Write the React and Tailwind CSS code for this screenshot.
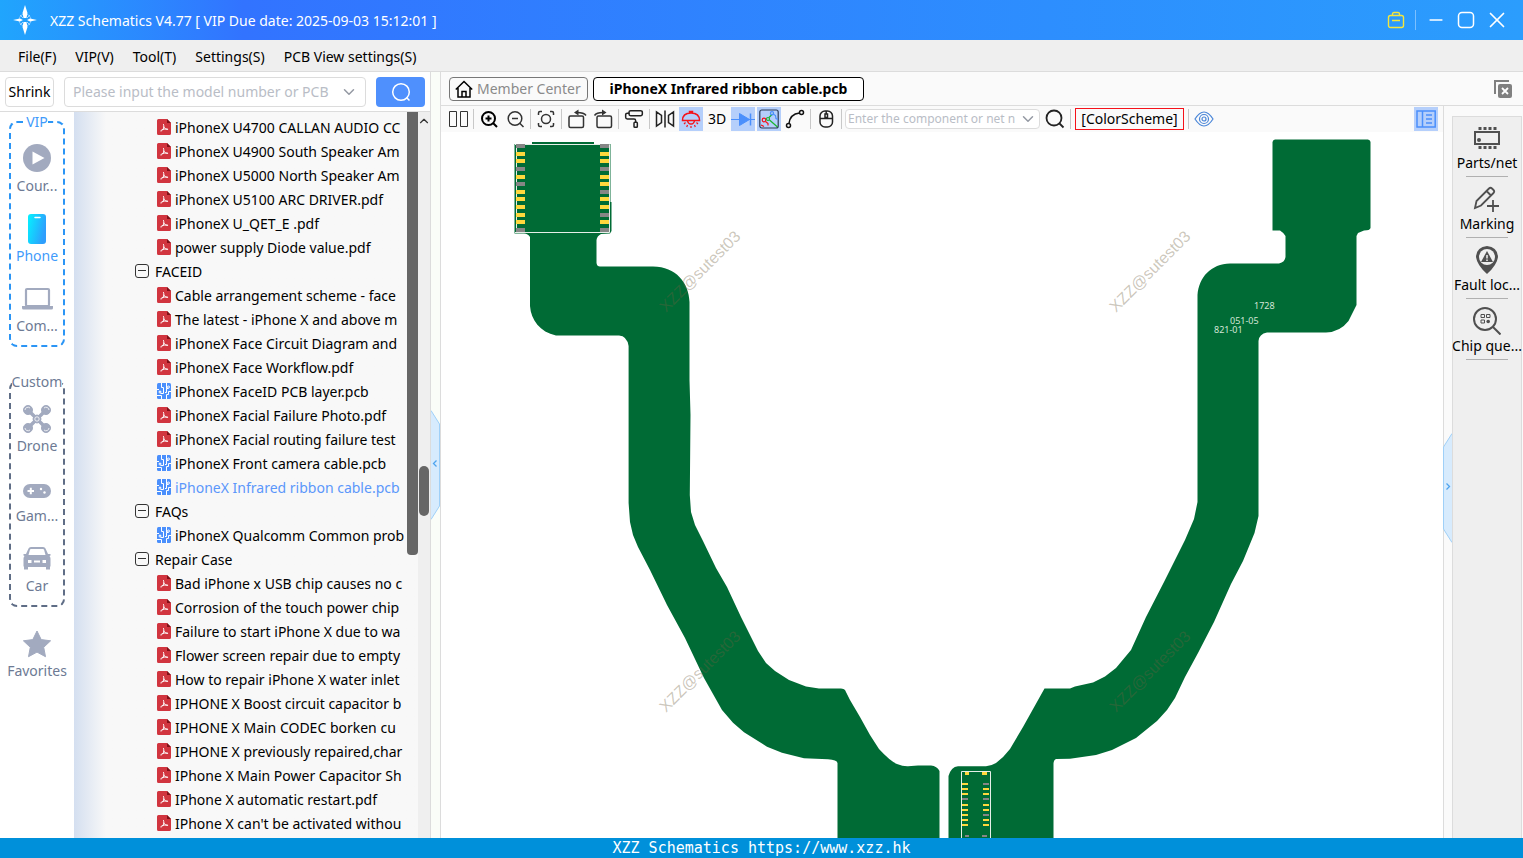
import { useState } from "react";
import { ChevronDown, ChevronUp, Minus, X, PaintRoller } from "lucide-react";

const MENU = ["File(F)", "VIP(V)", "Tool(T)", "Settings(S)", "PCB View settings(S)"];

const TREE = [
  { type: "pdf", name: "iPhoneX U4700 CALLAN AUDIO CC" },
  { type: "pdf", name: "iPhoneX U4900 South Speaker Am" },
  { type: "pdf", name: "iPhoneX U5000 North Speaker Am" },
  { type: "pdf", name: "iPhoneX U5100 ARC DRIVER.pdf" },
  { type: "pdf", name: "iPhoneX U_QET_E .pdf" },
  { type: "pdf", name: "power supply Diode value.pdf" },
  { type: "folder", name: "FACEID" },
  { type: "pdf", name: "Cable arrangement scheme - face" },
  { type: "pdf", name: "The latest - iPhone X and above m" },
  { type: "pdf", name: "iPhoneX Face Circuit Diagram and" },
  { type: "pdf", name: "iPhoneX Face Workflow.pdf" },
  { type: "pcb", name: "iPhoneX FaceID PCB layer.pcb" },
  { type: "pdf", name: "iPhoneX Facial Failure Photo.pdf" },
  { type: "pdf", name: "iPhoneX Facial routing failure test" },
  { type: "pcb", name: "iPhoneX Front camera cable.pcb" },
  { type: "pcb", name: "iPhoneX Infrared ribbon cable.pcb" },
  { type: "folder", name: "FAQs" },
  { type: "pcb", name: "iPhoneX Qualcomm Common prob" },
  { type: "folder", name: "Repair Case" },
  { type: "pdf", name: "Bad iPhone x USB chip causes no c" },
  { type: "pdf", name: "Corrosion of the touch power chip" },
  { type: "pdf", name: "Failure to start iPhone X due to wa" },
  { type: "pdf", name: "Flower screen repair due to empty" },
  { type: "pdf", name: "How to repair iPhone X water inlet" },
  { type: "pdf", name: "IPHONE X Boost circuit capacitor b" },
  { type: "pdf", name: "IPHONE X Main CODEC borken cu" },
  { type: "pdf", name: "IPHONE X previously repaired,char" },
  { type: "pdf", name: "IPhone X Main Power Capacitor Sh" },
  { type: "pdf", name: "IPhone X automatic restart.pdf" },
  { type: "pdf", name: "IPhone X can't be activated withou" },
];

function PdfIcon() {
  return (
    <svg width="14" height="16" viewBox="0 0 14 16" className="shrink-0">
      <path d="M1.500 0H10l4 4v10.500A1.500 1.500 0 0 1 12.500 16h-11A1.500 1.500 0 0 1 0 14.500v-13A1.500 1.500 0 0 1 1.500 0z" fill="#d1353f" />
      <path d="M10 0l4 4h-4z" fill="#7f1118" />
      <path d="M6.500 5.500c.6 2 .6 3-.5 4.800-.7 1.200-1.600 1.800-2.200 1.700M6.700 8c.8 1.600 2.300 2.300 4 2.300M4.800 10.800c1.500-.8 3.300-1 5.500-.6" fill="none" stroke="#fff" strokeWidth="1" strokeLinecap="round" />
    </svg>
  );
}

function PcbIcon() {
  return (
    <svg width="14" height="16" viewBox="0 0 14 16" className="shrink-0">
      <rect width="14" height="16" rx="1.500" fill="#4a8ffc" />
      <g fill="none" stroke="#fff" strokeWidth="1">
        <path d="M4.500 0v4.500h2v6M0 6.500h2M3.500 8.500h-1M4.500 16v-3.500H0M6.500 10.500H3.500M9.500 0v5.500h2M9.500 5.500v4H8M14 8.500h-2.500v3H9.500V16" />
        <circle cx="3" cy="9" r="1" />
        <circle cx="11.500" cy="4" r="1" />
      </g>
    </svg>
  );
}

function TreeRow({ node, active, onSelect }) {
  if (node.type === "folder")
    return (
      <li className="h-6">
        <button className="flex h-6 items-center gap-1.5 pl-[61px] whitespace-nowrap">
          <svg width="14" height="14" viewBox="0 0 14 14" fill="none" stroke="#333" className="shrink-0">
            <rect x=".5" y=".5" width="13" height="13" rx="2.500" />
            <path d="M3 6.500h8" />
          </svg>
          <span className="pt-0.5">{node.name}</span>
        </button>
      </li>
    );
  return (
    <li className="h-6">
      <button
        onClick={onSelect}
        className={`flex h-6 items-center gap-1 pl-[83px] whitespace-nowrap ${active ? "text-[#5b97fb]" : ""}`}
      >
        {node.type === "pdf" ? <PdfIcon /> : <PcbIcon />}
        <span className="pt-0.5">{node.name}</span>
      </button>
    </li>
  );
}

const RAIL_ICONS = {
  course: (
    <>
      <circle cx="14" cy="14" r="14" fill="#a2aabf" />
      <path d="M9.500 7.500l12 6.500-12 6.500z" fill="#fff" />
    </>
  ),
  phone: (
    <>
      <defs>
        <linearGradient id="phoneFill" x1="0" y1="0" x2="1" y2="0.4">
          <stop offset="0" stopColor="#04f3ff" />
          <stop offset="1" stopColor="#2e9efd" />
        </linearGradient>
      </defs>
      <rect x="5" y="0" width="18" height="30" rx="3" fill="url(#phoneFill)" />
      <path d="M12 3.500h5" stroke="#fff" strokeWidth="1.500" strokeLinecap="round" />
    </>
  ),
  computer: (
    <>
      <rect x="3" y="5" width="23" height="17" rx="1" fill="none" stroke="#a2aabf" strokeWidth="2.200" />
      <path d="M-1 22h12l1 1h5l1-1h12v2q0 1.500-1.500 1.500h-28Q-1 25.500-1 24z" fill="#a2aabf" />
    </>
  ),
  drone: (
    <g stroke="#a2aabf" fill="#a2aabf">
      <path d="M5 6l18 18M23 6L5 24" strokeWidth="3.500" />
      <circle cx="5" cy="6" r="4.500" />
      <circle cx="23" cy="6" r="4.500" />
      <circle cx="5" cy="24" r="4.500" />
      <circle cx="23" cy="24" r="4.500" />
      <circle cx="14" cy="15" r="4" />
      <g fill="none" stroke="#fff" strokeWidth=".8">
        <path d="M2 6a3 3 0 0 1 5-2M26 6a3 3 0 0 0-5-2M2 24a3 3 0 0 0 5 2M26 24a3 3 0 0 1-5 2" />
        <circle cx="14" cy="15" r="2.200" />
      </g>
    </g>
  ),
  game: (
    <>
      <rect x="0" y="10" width="28" height="14" rx="7" fill="#a2aabf" />
      <path d="M4.500 17h6.500M7.800 13.800v6.500" stroke="#fff" strokeWidth="2" />
      <circle cx="18" cy="15" r="1.200" fill="#fff" />
      <circle cx="21.500" cy="18.500" r="1.200" fill="#fff" />
    </>
  ),
  car: (
    <path
      transform="translate(0 2)"
      fillRule="evenodd"
      fill="#a2aabf"
      d="M5.500 2.500Q6 1 8 1h12q2 0 2.500 1.500L25 8h2.500v1.500l-1 .5q1 1 1 2.500V20.500h-.5v3h-4v-2.500H5v2.500H1v-3H.5v-8q0-1.500 1-2.500l-1-.5V8H3zM7 3.500L5.500 9h17L21 3.500Q20.500 3 20 3H8q-.7 0-1 .5zM5 14v3h3.500v-3zM11 14.500v2h6v-2zM19.500 14v3H23v-3z"
    />
  ),
  star: <path d="M14 2l4.200 8.600 9.400 1.200-6.900 6.500 1.800 9.400-8.500-4.600-8.500 4.600 1.800-9.400L.4 11.800l9.400-1.200z" fill="#a2aabf" stroke="#a2aabf" strokeLinejoin="round" />,
};

function RailItem({ icon, label, active }) {
  return (
    <button className="flex h-[70px] w-full flex-col items-center gap-1 pt-3">
      <svg width="28" height="28" viewBox="0 0 28 28" className="shrink-0 overflow-visible">{RAIL_ICONS[icon]}</svg>
      <span className={`h-5 leading-5 whitespace-nowrap ${active ? "text-[#3f9bfb]" : "text-[#6d7a94]"}`}>{label}</span>
    </button>
  );
}

function CategoryRail() {
  return (
    <nav className="w-[74px] shrink-0 overflow-hidden bg-white px-[9px]">
      <fieldset className="min-w-0 rounded-lg border-2 border-dashed border-[#2b95f5] pb-[3px]">
        <legend className="mx-auto h-5 leading-5 text-[#3f9bfb]">VIP</legend>
        <RailItem icon="course" label="Cour..." />
        <RailItem icon="phone" label="Phone" active />
        <RailItem icon="computer" label="Com..." />
      </fieldset>
      <fieldset className="mt-[25px] min-w-0 rounded-lg border-2 border-dashed border-[#5f6d86] pb-[3px]">
        <legend className="mx-auto h-5 leading-5 text-[#6d7a94]">Custom</legend>
        <RailItem icon="drone" label="Drone" />
        <RailItem icon="game" label="Gam..." />
        <RailItem icon="car" label="Car" />
      </fieldset>
      <div className="mt-2.5">
        <RailItem icon="star" label="Favorites" />
      </div>
    </nav>
  );
}

function ExplorerPanel() {
  const [selected, setSelected] = useState(15);

  return (
    <aside className="flex w-[431px] shrink-0 flex-col border-r border-[#dcdcdc]">
      <div className="flex h-10 shrink-0 items-center border-b border-[#dcdcdc] bg-white pr-[5px] pl-[5px]">
        <button className="h-[30px] w-[49px] rounded border border-[#dcdcdc] bg-white">Shrink</button>
        <div className="ml-2.5 flex h-[30px] w-[302px] items-center rounded border border-[#dcdcdc] pr-[7px] pl-2">
          <input
            aria-label="Model search"
            placeholder="Please input the model number or PCB"
            className="min-w-0 flex-1 outline-none placeholder:text-[#b9bdc6]"
          />
          <button aria-label="Show models">
            <ChevronDown size={18} color="#9499a3" strokeWidth={2} />
          </button>
        </div>
        <button aria-label="Search" className="ml-2.5 flex h-[30px] w-[49px] items-center justify-center rounded bg-[#4f90fd]">
          <svg width="20" height="20" viewBox="0 0 20 20" fill="none" stroke="#fff" strokeWidth="1.500">
            <circle cx="10" cy="10" r="8.300" />
            <path d="M15.500 15.500l3 3" />
          </svg>
        </button>
      </div>
      <div className="flex min-h-0 flex-1">
        <CategoryRail />
        <div className="flex min-w-0 flex-1 bg-linear-to-r from-[#d4dff0] via-[#f8f8f8] via-[32px] to-[#f8f8f8]">
          <ul className="min-w-0 flex-1 overflow-hidden pt-[3px]">
            {TREE.map((node, i) => (
              <TreeRow key={node.name} node={node} active={i === selected} onSelect={() => setSelected(i)} />
            ))}
          </ul>
          <div className="h-[61%] w-[11px] rounded-b bg-[#666]" />
        </div>
        <div className="flex w-3 flex-col items-center bg-[#efefef]">
          <ChevronUp size={14} color="#333" strokeWidth={2} className="mt-0.5 shrink-0" />
          <div className="h-[338px] shrink-0" />
          <div className="h-[50px] w-2.5 shrink-0 rounded-full bg-[#666]" />
        </div>
      </div>
    </aside>
  );
}

function Sep() {
  return <div className="mx-0.5 h-5 w-px shrink-0 bg-[#c8c8c8]" />;
}

function Tool({ label, on, children }) {
  return (
    <button aria-label={label} className="flex w-[26px] shrink-0 justify-center">
      <span className={`flex h-6 w-6 items-center justify-center ${on ? "bg-[#b5cffb]" : ""}`}>{children}</span>
    </button>
  );
}

function Glyph({ children, color = "#333", width = 1.5 }) {
  return (
    <svg width="20" height="20" viewBox="0 0 20 20" fill="none" stroke={color} strokeWidth={width} className="shrink-0">
      {children}
    </svg>
  );
}

function Toolbar() {
  return (
    <div className="flex h-[26px] shrink-0 items-center bg-[#fafafa] pr-[5px] pl-1">
      <Tool label="Split view">
        <Glyph width={1}><path d="M1.500 2.500h7v15h-7zM12.500 2.500h7v15h-7z" /></Glyph>
      </Tool>
      <Sep />
      <Tool label="Zoom in">
        <Glyph color="#000" width={2}><circle cx="9.500" cy="9.500" r="6.500" /><path d="M14 14l4 4M6.500 9.500h6M9.500 6.500v6" /></Glyph>
      </Tool>
      <Tool label="Zoom out">
        <Glyph><circle cx="10" cy="9.500" r="6.800" /><path d="M14.500 14l4 4M7 9.500h6" /></Glyph>
      </Tool>
      <Sep />
      <Tool label="Fit to window">
        <Glyph>
          <circle cx="10" cy="10" r="4.500" />
          <path d="M2.500 6V4q0-1.500 1.500-1.500h2M14 2.500h2q1.500 0 1.500 1.500v2M2.500 14v2q0 1.500 1.500 1.500h2M14 17.500h2q1.500 0 1.500-1.500v-2" />
        </Glyph>
      </Tool>
      <Sep />
      <Tool label="Rotate left">
        <Glyph><rect x="2" y="7" width="14.500" height="11.500" rx="1.500" /><path d="M19 6.500Q17 3.500 10 3.500" /><path d="M11.500.5L7 3.500l4.500 3z" fill="#333" stroke="none" /></Glyph>
      </Tool>
      <Tool label="Rotate right">
        <Glyph><rect x="4" y="7" width="14.500" height="11.500" rx="1.500" /><path d="M1.500 6.500Q3.500 3.500 10 3.500" /><path d="M9 .5l4.500 3L9 6.500z" fill="#333" stroke="none" /></Glyph>
      </Tool>
      <Sep />
      <Tool label="Paint"><PaintRoller size={20} color="#222" strokeWidth={1.8} className="-scale-x-100" /></Tool>
      <Sep />
      <Tool label="Mirror">
        <Glyph color="#222"><path d="M1.500 3v14l5-3.500v-7zM18.500 3v14l-5-3.500v-7zM10 1.500v17" /></Glyph>
      </Tool>
      <Tool label="Light" on>
        <Glyph color="#f5121a">
          <path d="M1.500 11.500q0-7.500 8.500-7.500t8.500 7.500zM8.500 4V2.500h3V4" />
          <path d="M6.500 11.500q.5 3.500 3.500 3.500t3.500-3.500" />
          <path d="M4.500 13.500l-1.500 1.500M15.500 13.500l1.500 1.500M6.500 16l-.8 2M13.500 16l.8 2M10 17v2" strokeWidth="1.200" />
        </Glyph>
      </Tool>
      <button className="w-[26px] shrink-0 text-center">3D</button>
      <Tool label="Diode" on>
        <svg width="24" height="24" viewBox="0 0 24 24" fill="#4a8ffc" stroke="#4a8ffc">
          <path d="M0 12.500h24" />
          <path d="M8.500 6.500v12l10-6z" />
          <path d="M19.500 6.500v12" strokeWidth="1.500" />
        </svg>
      </Tool>
      <Tool label="Net layer" on>
        <Glyph color="#2b3a55" width={1.2}>
          <rect x=".8" y="1" width="18.400" height="18" rx="2" />
          <g stroke="#f5121a"><circle cx="5" cy="11" r="1.800" /><path d="M6.500 12.500l2.500 2v2M2 16l3 1.500" /></g>
          <g stroke="#19b52c"><circle cx="9" cy="10" r="1.500" /><path d="M10 8.500l3.500-3.500M10.500 11l8 7" /></g>
          <g stroke="#4a8ffc"><circle cx="13" cy="4.200" r="1.600" /><path d="M14.500 5.200l2 1.300.5 3 2 1" /></g>
        </Glyph>
      </Tool>
      <Tool label="Curve">
        <Glyph color="#111"><circle cx="3.500" cy="16.500" r="2" /><circle cx="16.500" cy="3.500" r="2" /><path d="M4 14.500Q5 5 14.500 4" /></Glyph>
      </Tool>
      <Sep />
      <Tool label="Mouse mode">
        <Glyph color="#222"><rect x="4" y="2" width="12.500" height="16" rx="5" /><path d="M4 9.500h12.500M10.200 2v3M9 5h2.500v3.500H9z" /></Glyph>
      </Tool>
      <Sep />
      <div className="ml-px flex h-5 w-[195px] shrink-0 items-center rounded border border-[#dcdcdc] bg-white pr-0.5 pl-0.5">
        <input
          aria-label="Component search"
          placeholder="Enter the component or net n"
          className="min-w-0 flex-1 text-xs outline-none placeholder:text-[#b9bdc6]"
        />
        <button aria-label="Show components">
          <ChevronDown size={18} color="#9499a3" strokeWidth={2} />
        </button>
      </div>
      <div className="w-0.5 shrink-0" />
      <Tool label="Find">
        <Glyph color="#222" width={1.8}><circle cx="9" cy="9" r="7.500" /><path d="M14.500 14.500l4 4" /></Glyph>
      </Tool>
      <Sep />
      <button className="mx-0.5 h-[22px] w-[109px] shrink-0 border border-[#f5121a] leading-5">[ColorScheme]</button>
      <Sep />
      <Tool label="Preview">
        <Glyph color="#4a86d8" width={1.2}>
          <path d="M1 10q9-14 18 0q-9 14-18 0z" />
          <circle cx="10" cy="10" r="4.500" />
          <circle cx="10" cy="10" r="2" />
        </Glyph>
      </Tool>
      <button aria-label="Toggle side panel" className="ml-auto flex h-6 w-6 shrink-0 items-center justify-center bg-[#b5cffb]">
        <Glyph color="#4a8ffc"><path d="M1 2h18.200v16H1zM6.500 2v16M10 6h6M10 10h6M10 14h6" /></Glyph>
      </button>
    </div>
  );
}

const GOLD = "#ffd83d";
const GREY = "#868686";

// y, left pad, right pad
const SENSOR_PADS = [
  [144, GREY, GREY], [152, GOLD, GOLD], [159, GOLD, GOLD], [167, GREY, GREY], [175, GOLD, GOLD], [182, GREY, GOLD],
  [190, GOLD, GREY], [197, GOLD, GOLD], [205, GOLD, GOLD], [213, GOLD, GREY], [220, GOLD, GOLD], [228, GREY, GREY],
];
const PLUG_PADS = [
  [783, GOLD, GREY], [788, GOLD, GOLD], [793, GOLD, GOLD], [798, GREY, GREY], [804, GOLD, GOLD],
  [809, GOLD, GOLD], [814, GOLD, GREY], [819, GOLD, GOLD], [824, GOLD, GOLD],
];
const WATERMARKS = [[666, 313], [1116, 313], [666, 713], [1116, 713]];

const LEFT_FLEX =
  "M514.500 144H532V142H594V144H610.500V202H611.500V231L610 233.500L601 234Q597 236 596.500 240V263Q597 266.500 600 266.500H653C676 266.500 689 283 689.500 302V380L690.500 415L689.800 495L691 512L695 525L703 541L716 568L727 587L741 617L758 651L766 663L775 671L789 680L806 686.500L819 688.500H841Q844 688.500 845 690L850 700L860 717L870 735L879 749Q890 761 897 764Q903 766.500 908 766.300L918 765.500H931Q937 766 939.500 771V845H837.500V763Q837 760 828 759.300L804 758.300L782 752.700L767 746.700L744 732.300L733 722.700L722 710L704 678L685 638L667 605L650 570L638 547L633 535L630 522L628.600 503V346Q627 336 619 335.500H556C540 332 531 320 530 306V237Q528 233.500 524 233.500H514.500Z";
const RIGHT_FLEX =
  "M1275 139.500H1368Q1370.500 140 1370.500 142V228Q1370 230.500 1364 230.500L1358 233L1356.500 236V305L1348.500 321Q1340 332 1326 332.500H1267Q1259 334 1258.500 341V516L1254.500 533L1243 561L1231 584L1214 622L1198 653L1185 677L1175 698L1167 710L1157 721L1136 738L1112 750L1096 755L1070 758.700L1056 759Q1053.500 760 1053.500 764V845H948.500V776Q951 767 958 766.300H986Q992 765.500 996 763Q1004 757 1010 749L1023 727L1044.500 688.500H1070L1075 686.500L1093 682.500L1105 676.500L1116 668L1131 650L1146 617L1164 582L1185 540L1194 519L1197.500 502V295C1199 277 1211 264 1230 263.500H1279Q1285 262 1285.500 257V236Q1284 233 1280 230.500H1272.500V142Q1273 139.500 1275 139.500Z";

function BoardView() {
  return (
    <svg viewBox="441 132 1002 706" preserveAspectRatio="xMidYMin slice" className="h-full w-full" role="img" aria-label="Board view">
      <path d={LEFT_FLEX} fill="#006b35" />
      <path d={RIGHT_FLEX} fill="#006b35" />
      <path d="M516.500 145V232.500M515 144.500H609.500V232.500H515" fill="none" stroke="#e6efe8" />
      {SENSOR_PADS.map(([y, l, r]) => (
        <g key={y}>
          <rect x="516" y={y} width="9" height="4" fill={l} />
          <rect x="600" y={y} width="9" height="4" fill={r} />
        </g>
      ))}
      <path d="M961.500 840V771.500H990.500V840" fill="none" stroke="#e6efe8" />
      <path d="M965 772h4v3h-4zM982 772h5v3h-5z" fill={GOLD} />
      {PLUG_PADS.map(([y, l, r]) => (
        <g key={y}>
          <rect x="962" y={y} width="6" height="2" fill={l} />
          <rect x="983" y={y} width="6" height="2" fill={r} />
        </g>
      ))}
      <path d="M965 835h4v2h-4zM982 835h5v2h-5z" fill={GREY} />
      <g fill="#d3e5d6" className="text-[9px]">
        <text x="1254" y="309">1728</text>
        <text x="1230" y="324">051-05</text>
        <text x="1214" y="333">821-01</text>
      </g>
      <g fill="#6e6040" fillOpacity=".36" className="font-['Liberation_Sans',sans-serif] text-[16px]">
        {WATERMARKS.map(([x, y]) => (
          <text key={`${x}-${y}`} transform={`translate(${x} ${y}) rotate(-45)`}>XZZ@sutest03</text>
        ))}
      </g>
    </svg>
  );
}

const SIDE_TOOLS = [
  {
    label: "Parts/net",
    icon: <><rect x="2" y="8" width="24" height="12" /><path d="M5.500 4.500h18M5.500 23.500h18" strokeWidth="3" strokeDasharray="3 2" /><circle cx="6" cy="16" r="1" /></>,
  },
  {
    label: "Marking",
    icon: <g strokeWidth="1.800"><path d="M2 23l1.500-7L16 3.500q1.500-1.500 3 0l1.500 1.500q1.500 1.500 0 3L8 20.500zM13.500 6l4.500 4.500" /><path d="M14 21h12M20 15v12" /></g>,
  },
  {
    label: "Fault loc...",
    icon: (
      <>
        <path d="M14 0q10.500 1 11 11Q24 19 14 28Q4 19 3 11Q3.500 1 14 0z" fill="#505050" stroke="none" />
        <circle cx="14" cy="11" r="8" fill="#efefef" stroke="none" />
        <path d="M14 5l6 11H8z" fill="#505050" stroke="none" />
        <path d="M14 9v3.500M14 13.500v1.500" stroke="#efefef" strokeWidth="1.500" />
      </>
    ),
  },
  {
    label: "Chip que...",
    icon: (
      <>
        <circle cx="12" cy="12" r="11" />
        <path d="M19.500 19.500l8 8" />
        <path d="M8 7.500h3.500v3H8zM13.500 7.500H17v3h-3.500zM8 13h3.500v3H8z" strokeWidth="1" />
        <circle cx="15.200" cy="14.500" r="1.800" fill="#505050" stroke="none" />
      </>
    ),
  },
];

function Handle({ side }) {
  return (
    <button aria-label={`Collapse ${side} panel`} className="block w-[9px] shrink-0">
      <svg width="9" height="110" viewBox="0 0 9 110" fill="none" className={side === "right" ? "-scale-x-100" : ""}>
        <path d="M0 .5L8.500 14V96L0 109.500" fill="#d7ebfd" stroke="#9fd0f8" />
        <path d="M5.500 50.500L2.500 53.500l3 3" stroke="#4ea4ee" strokeWidth="1.300" />
      </svg>
    </button>
  );
}

function SidePanel() {
  return (
    <div className="flex w-20 shrink-0 border-l border-[#dcdcdc] bg-[#fafafa] pr-px">
      <div className="flex w-2 shrink-0 flex-col items-end justify-center pt-8">
        <Handle side="right" />
      </div>
      <div className="mt-2.5 flex min-w-0 flex-1 flex-col items-center border border-b-0 border-[#dcdcdc] bg-[#efefef]">
        {SIDE_TOOLS.map((t) => (
          <button key={t.label} className="flex h-[61px] flex-col items-center pt-[7px]">
            <svg width="28" height="28" viewBox="0 0 28 28" fill="none" stroke="#505050" strokeWidth="2" className="shrink-0">{t.icon}</svg>
            <span className="mt-px mb-[3px] h-5 leading-5 whitespace-nowrap">{t.label}</span>
            <span className="h-px w-[42px] bg-[#b0b0b0]" />
          </button>
        ))}
      </div>
    </div>
  );
}

function TitleBar() {
  return (
    <header className="flex h-10 shrink-0 items-center bg-linear-to-r from-[#20a5fd] via-[#3273ff] via-[16%] to-[#2b9dfd] pr-[15px] pl-3 text-white">
      <svg width="26" height="30" viewBox="0 0 26 30" className="shrink-0">
        <circle cx="13" cy="15" r="6" fill="none" stroke="#9fd3ff" strokeWidth=".8" />
        <path d="M13 0l2.500 8-1 5h-3l-1-5zM13 30l2.500-8-1-5h-3l-1 5zM1 15l7-1.500 3 1.500-3 1.500zM25 15l-7-1.500-3 1.500 3 1.500z" fill="#fff" />
        <path d="M8 10l3 3M18 10l-3 3M8 20l3-3M18 20l-3-3" stroke="#9fd3ff" />
      </svg>
      <h1 className="ml-3 pt-0.5 whitespace-nowrap">XZZ Schematics V4.77 [ VIP Due date: 2025-09-03 15:12:01 ]</h1>
      <div className="ml-auto flex items-center">
        <button aria-label="Toolbox">
          <svg width="18" height="18" viewBox="0 0 18 18" fill="none" stroke="#f5e63c" strokeWidth="1.400">
            <rect x="1.500" y="4.500" width="15" height="12" rx="2" />
            <path d="M5.500 4.500V3q0-1.500 1.500-1.500h4q1.500 0 1.500 1.500v1.500M5 9.500h8" />
          </svg>
        </button>
        <div className="mx-2.5 h-5 w-px bg-[#7cc0ff]" />
        <button aria-label="Minimize"><Minus size={20} strokeWidth={2} /></button>
        <button aria-label="Maximize" className="ml-2.5">
          <svg width="20" height="20" viewBox="0 0 20 20" fill="none" stroke="#fff" strokeWidth="1.500">
            <rect x="2.500" y="2.500" width="15" height="15" rx="3.500" />
          </svg>
        </button>
        <button aria-label="Close" className="ml-2 -mr-0.5"><X size={26} strokeWidth={1.6} /></button>
      </div>
    </header>
  );
}

export default function App() {
  return (
    <div className="flex h-screen flex-col overflow-hidden bg-white font-['Noto_Sans',sans-serif] text-sm text-black">
      <TitleBar />
      <nav className="flex h-8 shrink-0 items-center gap-[19px] border-b border-[#dcdcdc] bg-[#efefef] pt-0.5 pl-[18px]">
        {MENU.map((m) => (
          <button key={m}>{m}</button>
        ))}
      </nav>

      <div className="flex min-h-0 flex-1">
        <ExplorerPanel />
        <div className="flex w-[9px] shrink-0 flex-col justify-center bg-[#fafdf8] pt-5">
          <Handle side="left" />
        </div>

        <main className="flex min-w-0 flex-1 flex-col border-l border-[#dcdcdc]">
          {/* Document tabs */}
          <div className="flex h-[34px] shrink-0 items-center border-b border-[#dcdcdc] bg-[#fafafa] pr-[11px] pl-2">
            <button className="flex h-6 w-[139px] items-center gap-1 rounded border border-[#777] pl-[5px] whitespace-nowrap text-[#8a8a8a]">
              <svg width="18" height="18" viewBox="0 0 18 18" fill="none" stroke="#000" strokeWidth="1.500" className="shrink-0">
                <path d="M.8 9.500L9 1.500l8.200 8M3 8v9h12V8M7 17v-5.500h4V17" />
              </svg>
              Member Center
            </button>
            <button className="ml-[5px] h-6 w-[271px] rounded border border-black bg-white font-bold whitespace-nowrap">
              iPhoneX Infrared ribbon cable.pcb
            </button>
            <button aria-label="Close all" className="ml-auto">
              <svg width="18" height="18" viewBox="0 0 18 18" className="block">
                <path d="M1 14V1h14" fill="none" stroke="#808080" strokeWidth="2" />
                <rect x="4" y="4" width="14" height="14" rx="2" fill="#808080" />
                <path d="M8 8l6 6M14 8l-6 6" stroke="#fff" strokeWidth="1.800" />
              </svg>
            </button>
          </div>
          <div className="flex min-h-0 flex-1">
            <div className="flex min-w-0 flex-1 flex-col">
              <Toolbar />
              <div className="min-h-0 flex-1">
                <BoardView />
              </div>
            </div>
            <SidePanel />
          </div>
        </main>
      </div>

      <footer className="h-5 shrink-0 bg-[#0090da] text-center font-['DejaVu_Sans_Mono',monospace] text-[15px] leading-5 text-white">
        XZZ Schematics https://www.xzz.hk
      </footer>
    </div>
  );
}
